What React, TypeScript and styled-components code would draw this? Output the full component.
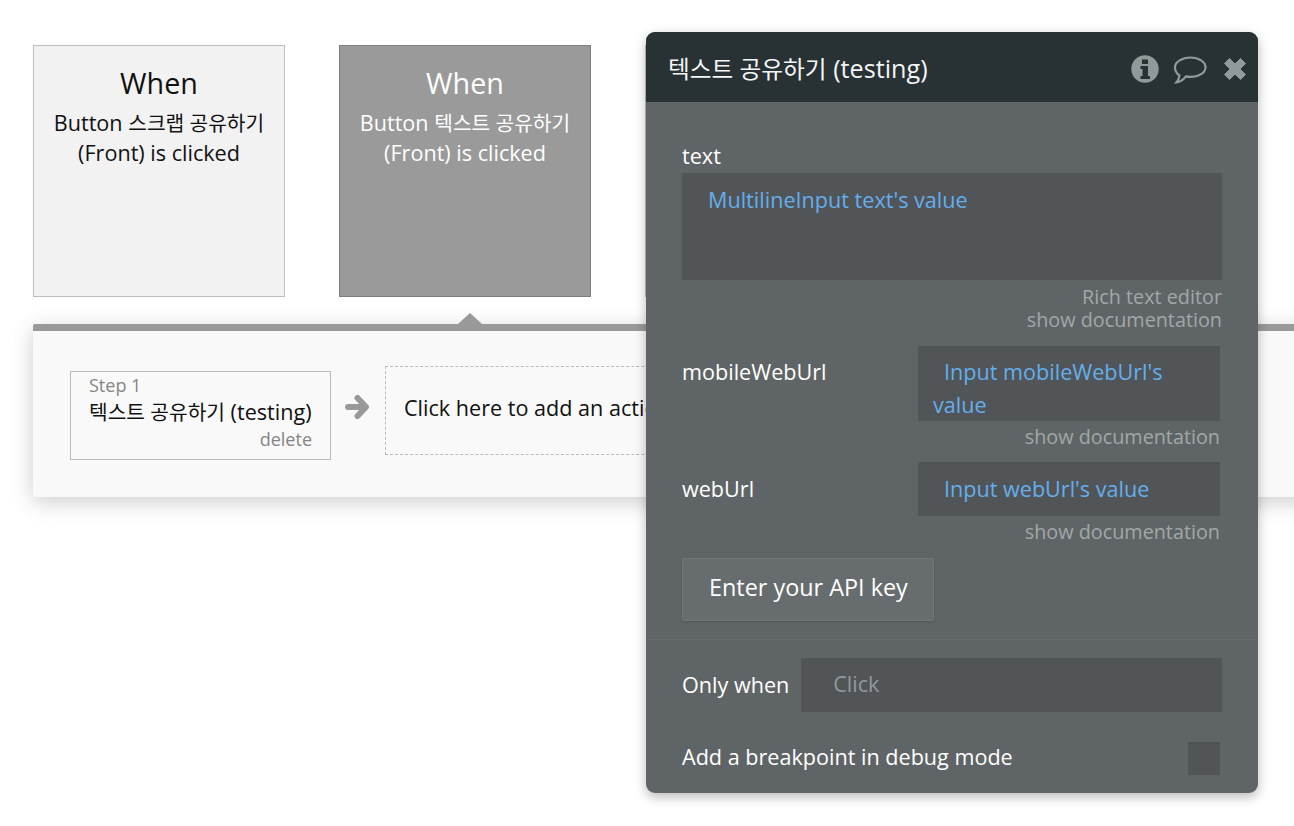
import React from "react";
import styled, { createGlobalStyle } from "styled-components";

const Global = createGlobalStyle`
  html, body { margin: 0; padding: 0; background: #fff; overflow: hidden; }
  body { width: 1294px; height: 826px; font-family: "Open Sans", "Noto Sans CJK KR", sans-serif; }
  * { box-sizing: border-box; }
`;

const Page = styled.div`
  position: relative;
  width: 1294px;
  height: 826px;
  overflow: hidden;
`;

const Hangul = styled.span`
  font-size: 0.94em;
`;

const Cards = styled.div`
  display: flex;
  gap: 54px;
  padding: 45px 0 0 33px;
  width: 1400px;
`;

const Card = styled.div<{ $active?: boolean }>`
  flex: none;
  width: 252px;
  height: 252px;
  padding-top: 18px;
  text-align: center;
  border: 1px solid ${(p) => (p.$active ? "#7f7f7f" : "#bdbdbd")};
  background: ${(p) => (p.$active ? "#9a9a9a" : "#f2f2f2")};
  color: ${(p) => (p.$active ? "#ffffff" : "#111111")};
`;

const CardTitle = styled.div`
  font-size: 28.7px;
  line-height: 38px;
  margin-bottom: 6px;
`;

const CardText = styled.div`
  font-size: 21.6px;
  line-height: 30px;
  padding: 0 8px;
`;

const Panel = styled.div`
  position: relative;
  margin: 27px 0 0 33px;
  width: 1300px;
  height: 173px;
  background: #f9f9f9;
  border-top: 7px solid #999999;
  border-radius: 2px 0 0 2px;
  box-shadow: 0 5px 22px rgba(0, 0, 0, 0.2);
  display: flex;
  align-items: flex-start;
  padding: 40px 0 0 37px;
`;

const Notch = styled.div`
  position: absolute;
  left: 425px;
  top: -18px;
  width: 0;
  height: 0;
  border-left: 12px solid transparent;
  border-right: 12px solid transparent;
  border-bottom: 11px solid #999999;
`;

const Step = styled.div`
  flex: none;
  width: 261px;
  height: 89px;
  border: 1px solid #bbbbbb;
  padding: 2px 18px 0;
  display: flex;
  flex-direction: column;
`;

const StepLabel = styled.div`
  font-size: 18px;
  line-height: 23px;
  color: #858585;
`;

const StepName = styled.div`
  font-size: 21.6px;
  line-height: 30px;
  color: #111111;
  white-space: nowrap;
`;

const StepDelete = styled.div`
  font-size: 18px;
  line-height: 24px;
  color: #858585;
  text-align: right;
`;

const Arrow = styled.svg`
  flex: none;
  width: 26px;
  height: 26px;
  margin: 23px 15px 0 13px;
  color: #999999;
`;

const AddAction = styled.div`
  flex: none;
  width: 400px;
  height: 89px;
  margin-top: -5px;
  border: 1px dashed #bbbbbb;
  padding: 26px 18px 0;
  font-size: 21.6px;
  line-height: 30px;
  color: #111111;
  white-space: nowrap;
`;

const Popup = styled.div`
  position: absolute;
  left: 646px;
  top: 32px;
  width: 612px;
  height: 761px;
  border-radius: 9px;
  background: #5f6566;
  box-shadow: 0 4px 12px rgba(0, 0, 0, 0.28);
  color: #ffffff;
  overflow: hidden;
`;

const Header = styled.div`
  height: 70px;
  background: #283133;
  display: flex;
  align-items: center;
  padding: 2px 11px 0 22px;
  font-size: 25.2px;
`;

const HeaderTitle = styled.div`
  flex: 1;
  color: #f4f5f5;
`;

const HeaderIcons = styled.div`
  display: flex;
  align-items: center;
  color: #8f9b9a;
`;

const InfoIcon = styled.svg`
  display: block;
  flex: none;
  width: 28px;
  height: 28px;
  margin: 1px 14px 0 0;
`;

const BubbleIcon = styled.svg`
  display: block;
  flex: none;
  width: 34px;
  height: 28px;
  margin: 3px 16px 0 0;
`;

const CloseIcon = styled.svg`
  display: block;
  flex: none;
  width: 24px;
  height: 24px;
  margin-top: 1px;
`;

const Body = styled.div`
  padding: 39px 36px 0;
  height: 538px;
  border-bottom: 1px solid #666c6d;
`;

const FieldLabel = styled.div`
  font-size: 21.6px;
  line-height: 30px;
  height: 32px;
`;

const Editor = styled.div`
  height: 107px;
  background: #515558;
  color: #65aeec;
  font-size: 21.6px;
  line-height: 30px;
  padding: 12px 26px;
`;

const Hint = styled.div<{ $inset?: boolean; $gap?: number; $after?: number }>`
  text-align: right;
  font-size: 19.8px;
  line-height: 23px;
  color: #a2a7a8;
  padding-right: ${(p) => (p.$inset ? "2px" : "0")};
  padding-bottom: ${(p) => p.$after ?? 0}px;
  margin-top: ${(p) => p.$gap ?? 0}px;
`;

const InlineRow = styled.div`
  display: flex;
  justify-content: space-between;
  align-items: flex-start;
  margin-top: 14px;
`;

const InlineLabel = styled.div<{ $drop: number }>`
  font-size: 21.6px;
  line-height: 30px;
  padding-top: ${(p) => p.$drop}px;
`;

const InlineInput = styled.div<{ $height: number; $drop: number }>`
  width: 302px;
  height: ${(p) => p.$height}px;
  margin-right: 2px;
  background: #515558;
  color: #65aeec;
  font-size: 21.6px;
  line-height: 33px;
  padding: ${(p) => p.$drop}px 14px 0 15px;
  text-indent: 11px;
`;

const ApiButton = styled.div`
  display: flex;
  align-items: center;
  width: 252px;
  height: 63px;
  margin-top: 15px;
  padding: 0 0 5px 26px;
  font-size: 23.4px;
  background: #676c6e;
  border: 1px solid #70767a;
  border-radius: 2px;
  box-shadow: 0 1px 2px rgba(0, 0, 0, 0.18);
`;

const OnlyWhen = styled.div`
  display: flex;
  align-items: center;
  padding: 18px 36px 0;
  font-size: 21.6px;
`;

const OnlyLabel = styled.div`
  padding-bottom: 2px;
`;

const OnlyInput = styled.div`
  margin-left: 12px;
  flex: 1;
  height: 54px;
  background: #515558;
  color: #92999a;
  font-size: 21.6px;
  line-height: 52px;
  padding-left: 32px;
`;

const Breakpoint = styled.div`
  display: flex;
  justify-content: space-between;
  align-items: center;
  padding: 30px 38px 0 36px;
  font-size: 21.6px;
`;

const BreakpointLabel = styled.div`
  padding-bottom: 4px;
`;

const Check = styled.div`
  width: 32px;
  height: 33px;
  background: #515558;
`;

export default function App() {
  return (
    <Page>
      <Global />
      <Cards>
        <Card>
          <CardTitle>When</CardTitle>
          <CardText>Button <Hangul>스크랩 공유하기</Hangul> (Front) is clicked</CardText>
        </Card>
        <Card $active>
          <CardTitle>When</CardTitle>
          <CardText>Button <Hangul>텍스트 공유하기</Hangul> (Front) is clicked</CardText>
        </Card>
        <Card />
      </Cards>
      <Panel>
        <Notch />
        <Step>
          <StepLabel>Step 1</StepLabel>
          <StepName><Hangul>텍스트 공유하기</Hangul> (testing)</StepName>
          <StepDelete>delete</StepDelete>
        </Step>
        <Arrow viewBox="0 0 26 26" fill="none" stroke="currentColor" strokeWidth="6" strokeLinejoin="round" strokeLinecap="round">
          <path d="M4 13 H21 M13.500 4 L22 13 L13.500 22" />
        </Arrow>
        <AddAction>Click here to add an action...</AddAction>
      </Panel>
      <Popup>
        <Header>
          <HeaderTitle><Hangul>텍스트 공유하기</Hangul> (testing)</HeaderTitle>
          <HeaderIcons>
            <InfoIcon viewBox="0 0 28 28">
              <circle cx="14" cy="14" r="13.700" fill="currentColor" />
              <path fill="#283133" d="M11 4.500h6v4.500h-6zM9.500 11h7.500v10h2v3H9.500v-3h2v-7h-2z" />
            </InfoIcon>
            <BubbleIcon viewBox="0 0 34 28" fill="none" stroke="currentColor" strokeWidth="2.200">
              <path d="M17.500 1.500c8.300 0 15 4.300 15 9.700s-6.700 9.700-15 9.700c-1.600 0-3.200-.2-4.600-.5C11 22.900 8.500 25.800 3.500 26.300c1.300-1.600 2.800-3.800 2.900-7.100C3.400 17.400 2 14.300 2 11.200 2 5.800 9.200 1.500 17.500 1.500z" />
            </BubbleIcon>
            <CloseIcon viewBox="0 0 24 24" fill="currentColor" stroke="currentColor" strokeWidth="1" strokeLinejoin="round">
              <path d="M6.500 1.500 12 7l5.500-5.500 5 5L17 12l5.500 5.500-5 5L12 17l-5.500 5.500-5-5L7 12 1.500 6.500z" />
            </CloseIcon>
          </HeaderIcons>
        </Header>
        <Body>
          <FieldLabel>text</FieldLabel>
          <Editor>MultilineInput text's value</Editor>
          <Hint $gap={5}>Rich text editor</Hint>
          <Hint $after={1}>show documentation</Hint>
          <InlineRow>
            <InlineLabel $drop={11}>mobileWebUrl</InlineLabel>
            <InlineInput $height={75} $drop={9}>Input mobileWebUrl's value</InlineInput>
          </InlineRow>
          <Hint $inset $gap={4}>show documentation</Hint>
          <InlineRow>
            <InlineLabel $drop={12}>webUrl</InlineLabel>
            <InlineInput $height={54} $drop={10}>Input webUrl's value</InlineInput>
          </InlineRow>
          <Hint $inset $gap={4}>show documentation</Hint>
          <ApiButton>Enter your API key</ApiButton>
        </Body>
        <OnlyWhen>
          <OnlyLabel>Only when</OnlyLabel>
          <OnlyInput>Click</OnlyInput>
        </OnlyWhen>
        <Breakpoint>
          <BreakpointLabel>Add a breakpoint in debug mode</BreakpointLabel>
          <Check />
        </Breakpoint>
      </Popup>
    </Page>
  );
}
